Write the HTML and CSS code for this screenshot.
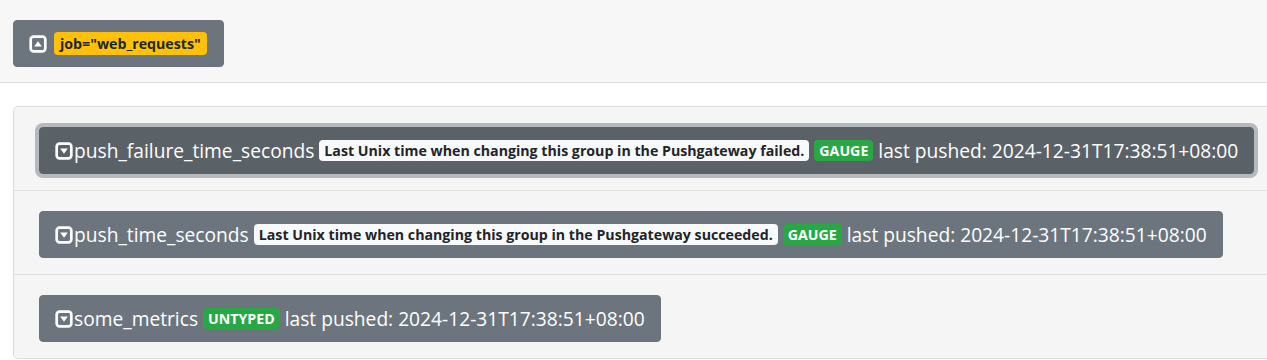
FILE: index.html
```html
<!DOCTYPE html>
<html>
<head>
	<title>Pushgateway</title>
	<link rel="stylesheet" href="styles.css">
</head>
<body>
	<div class="group">
		<div class="group_header">
			<button class="btn job_btn">
				<svg class="toggle_icon" viewBox="0 0 16 16"><rect x="1.5" y="1.5" width="13" height="13" rx="2.5" fill="none" stroke="#fff" stroke-width="2.4"/><path d="M4.6 10.2 L8 5.6 L11.4 10.2 Z" fill="#fff"/></svg>
				<span class="badge badge_warning">job="web_requests"</span>
			</button>
		</div>
		<div class="group_body">
			<div class="metric_list">
				<div class="metric_row">
					<button class="btn metric_btn focused">
						<svg class="toggle_icon" viewBox="0 0 16 16"><rect x="1.5" y="1.5" width="13" height="13" rx="2.5" fill="none" stroke="#fff" stroke-width="2.4"/><path d="M4.6 5.8 L8 10.4 L11.4 5.8 Z" fill="#fff"/></svg><span class="metric_name">push_failure_time_seconds</span>
						<span class="badge badge_light">Last Unix time when changing this group in the Pushgateway failed.</span>
						<span class="badge badge_success">GAUGE</span>
						<span>last pushed: 2024-12-31T17:38:51+08:00</span>
					</button>
				</div>
				<div class="metric_row">
					<button class="btn metric_btn">
						<svg class="toggle_icon" viewBox="0 0 16 16"><rect x="1.5" y="1.5" width="13" height="13" rx="2.5" fill="none" stroke="#fff" stroke-width="2.4"/><path d="M4.6 5.8 L8 10.4 L11.4 5.8 Z" fill="#fff"/></svg><span class="metric_name">push_time_seconds</span>
						<span class="badge badge_light">Last Unix time when changing this group in the Pushgateway succeeded.</span>
						<span class="badge badge_success">GAUGE</span>
						<span>last pushed: 2024-12-31T17:38:51+08:00</span>
					</button>
				</div>
				<div class="metric_row">
					<button class="btn metric_btn">
						<svg class="toggle_icon" viewBox="0 0 16 16"><rect x="1.5" y="1.5" width="13" height="13" rx="2.5" fill="none" stroke="#fff" stroke-width="2.4"/><path d="M4.6 5.8 L8 10.4 L11.4 5.8 Z" fill="#fff"/></svg><span class="metric_name">some_metrics</span>
						<span class="badge badge_success">UNTYPED</span>
						<span>last pushed: 2024-12-31T17:38:51+08:00</span>
					</button>
				</div>
			</div>
		</div>
	</div>
</body>
</html>
```

FILE: styles.css
```css
*{
	box-sizing: border-box;
}
body
{
	margin: 0px;
	background-color: #fff;
	font-family: "Open Sans", "Noto Sans", sans-serif;
	overflow: hidden;
}
.group_header
{
	background-color: #f7f7f7;
	border-bottom: 1px solid #dcdcdc;
	padding: 20px 13px 15px;
}
.group_body
{
	padding: 23px 0px 0px 13px;
}
.metric_list
{
	margin-right: -20px;
	background-color: #f5f5f5;
	border: 1px solid #dcdcdc;
	border-radius: 5px;
}
.metric_row
{
	padding: 20px 25px 16px;
	border-bottom: 1px solid #dfdfdf;
}
.metric_row:last-child
{
	border-bottom: none;
}
.btn
{
	display: inline-flex;
	align-items: center;
	gap: 5px;
	min-height: 47px;
	background-color: #6c757d;
	color: #fff;
	border: 1px solid #6c757d;
	border-radius: 4px;
	font-family: inherit;
	font-size: 19.2px;
	line-height: 28px;
	padding: 8px 15px;
	white-space: nowrap;
	outline: none;
}
.job_btn
{
	gap: 7px;
	padding-right: 16px;
}
.job_btn .badge
{
	padding: 4px 6px;
}
.focused
{
	background-color: #5a6268;
	border-color: #5a6268;
	box-shadow: 0 0 0 4px #b5b9bd;
}
.toggle_icon
{
	width: 18px;
	height: 18px;
	flex: none;
}
.metric_name
{
	margin-left: -4px;
}
.badge
{
	display: inline-block;
	font-size: 14.2px;
	font-weight: 700;
	line-height: 15px;
	padding: 3px 5px;
	border-radius: 4px;
}
.badge_warning
{
	background-color: #ffc107;
	color: #212529;
}
.badge_light
{
	background-color: #f8f9fa;
	color: #212529;
}
.badge_success
{
	background-color: #28a745;
	color: #fff;
}
```
